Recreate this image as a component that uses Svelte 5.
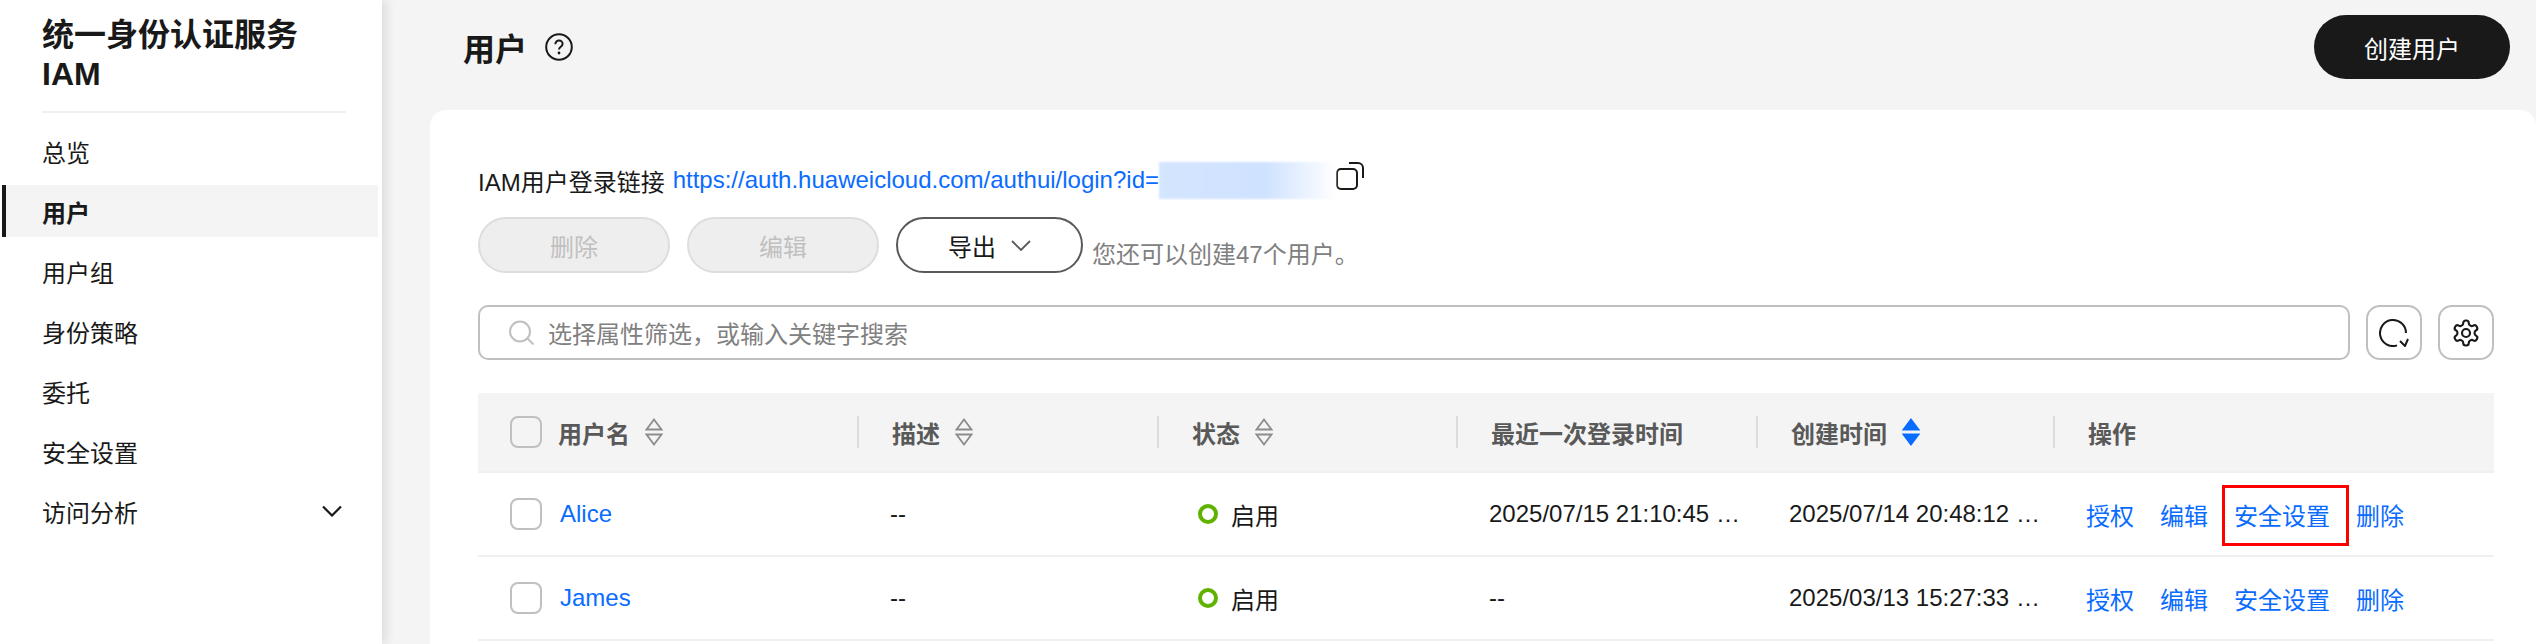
<script>
	// Sidebar entries
	const navItems = ["总览", "用户", "用户组", "身份策略", "委托", "安全设置", "访问分析"];

	// Table columns
	const columns = [
		{ name: "用户名", sort: "none" },
		{ name: "描述", sort: "none" },
		{ name: "状态", sort: "none" },
		{ name: "最近一次登录时间" },
		{ name: "创建时间", sort: "down" },
		{ name: "操作" },
	];

	const users = [
		{ name: "Alice", desc: "--", status: "启用", login: "2025/07/15 21:10:45 GMT+08:00", created: "2025/07/14 20:48:12 GMT+08:00", marked: true },
		{ name: "James", desc: "--", status: "启用", login: "--", created: "2025/03/13 15:27:33 GMT+08:00", marked: false },
	];
</script>

<div class="page">
	<aside class="sidebar">
		<h2 class="service">统一身份认证服务<br />IAM</h2>
		<div class="rule"></div>
		<nav>
			{#each navItems as item}
				<div class="nav-item" class:active={item === "用户"}>
					<span>{item}</span>
					{#if item === "访问分析"}
						<svg class="nav-chevron" width="20" height="12" viewBox="0 0 20 12" fill="none">
							<path d="M1 1.5l9 9 9-9" stroke="#191919" stroke-width="2.2" />
						</svg>
					{/if}
				</div>
			{/each}
		</nav>
	</aside>

	<main>
		<header>
			<h1>用户</h1>
			<svg class="help" width="28" height="28" viewBox="0 0 28 28" fill="none">
				<circle cx="14" cy="14" r="12.8" stroke="#191919" stroke-width="2" />
				<path d="M10.4 11.2c0-2.2 1.6-3.6 3.6-3.6s3.6 1.4 3.6 3.3c0 2.8-3.6 2.9-3.6 5.6" stroke="#191919" stroke-width="2" />
				<circle cx="14" cy="20" r="1.4" fill="#191919" />
			</svg>
			<button class="create">创建用户</button>
		</header>

		<section class="card">
			<div class="login-link">
				<span>IAM用户登录链接</span>
				<span class="link">https://auth.huaweicloud.com/authui/login?id=</span>
				<span class="blur"></span>
				<svg class="copy" width="28" height="28" viewBox="0 0 28 28" fill="none">
					<rect x="1" y="7" width="20" height="20" rx="4" stroke="#191919" stroke-width="2" />
					<path d="M13 1h9a5 5 0 0 1 5 5v10" stroke="#191919" stroke-width="2" />
				</svg>
			</div>

			<div class="actions">
				<button class="pill" disabled>删除</button>
				<button class="pill" disabled>编辑</button>
				<button class="pill export">
					导出
					<svg width="20" height="11" viewBox="0 0 20 11" fill="none">
						<path d="M1 1l9 9 9-9" stroke="#595959" stroke-width="1.8" />
					</svg>
				</button>
				<span class="quota">您还可以创建47个用户。</span>
			</div>

			<div class="filter">
				<div class="search">
					<svg width="27" height="26" viewBox="0 0 27 26" fill="none">
						<circle cx="12" cy="11.5" r="10" stroke="#c0c0c0" stroke-width="2" />
						<path d="M19.5 18.5l6 6" stroke="#c0c0c0" stroke-width="2" />
					</svg>
					<span>选择属性筛选，或输入关键字搜索</span>
				</div>
				<button class="icon-btn" aria-label="刷新">
					<svg width="30" height="28" viewBox="0 0 30 28" fill="none">
						<path d="M27 14a13 13 0 1 0-9 12.4" stroke="#191919" stroke-width="2" />
						<path d="M21 22l5 5 3-7" stroke="#191919" stroke-width="2" />
					</svg>
				</button>
				<button class="icon-btn" aria-label="设置">
					<svg width="30" height="30" viewBox="0 0 24 24" fill="none" stroke="#191919" stroke-width="1.7">
						<path d="M12.22 2h-.44a2 2 0 0 0-2 2v.18a2 2 0 0 1-1 1.73l-.43.25a2 2 0 0 1-2 0l-.15-.08a2 2 0 0 0-2.73.73l-.22.38a2 2 0 0 0 .73 2.73l.15.1a2 2 0 0 1 1 1.72v.51a2 2 0 0 1-1 1.74l-.15.09a2 2 0 0 0-.73 2.73l.22.38a2 2 0 0 0 2.73.73l.15-.08a2 2 0 0 1 2 0l.43.25a2 2 0 0 1 1 1.73V20a2 2 0 0 0 2 2h.44a2 2 0 0 0 2-2v-.18a2 2 0 0 1 1-1.73l.43-.25a2 2 0 0 1 2 0l.15.08a2 2 0 0 0 2.73-.73l.22-.39a2 2 0 0 0-.73-2.73l-.15-.08a2 2 0 0 1-1-1.74v-.5a2 2 0 0 1 1-1.74l.15-.09a2 2 0 0 0 .73-2.73l-.22-.38a2 2 0 0 0-2.73-.73l-.15.08a2 2 0 0 1-2 0l-.43-.25a2 2 0 0 1-1-1.73V4a2 2 0 0 0-2-2z" />
						<circle cx="12" cy="12" r="3.2" />
					</svg>
				</button>
			</div>

			<div class="table">
				<div class="row head">
					{#each columns as col, i}
						<div class="cell">
							{#if i === 0}<span class="check"></span>{/if}
							<span class="th">{col.name}</span>
							{#if col.sort}
								<svg class="sort" width="18" height="28" viewBox="0 0 18 28" fill="none">
									<path d="M9 1.5l7.5 10h-15z" stroke={col.sort === "down" ? "#0a6cff" : "#8c8c8c"} fill={col.sort === "down" ? "#0a6cff" : "none"} stroke-width="1.8" />
									<path d="M9 26.5l7.5-10h-15z" stroke={col.sort === "down" ? "#0a6cff" : "#8c8c8c"} fill={col.sort === "down" ? "#0a6cff" : "none"} stroke-width="1.8" />
								</svg>
							{/if}
						</div>
					{/each}
				</div>

				{#each users as user}
					<div class="row">
						<div class="cell">
							<span class="check"></span>
							<span class="link user">{user.name}</span>
						</div>
						<div class="cell">{user.desc}</div>
						<div class="cell status">
							<span class="dot"></span>
							{user.status}
						</div>
						<div class="cell"><span class="clip">{user.login}</span></div>
						<div class="cell"><span class="clip">{user.created}</span></div>
						<div class="cell ops">
							<span class="link">授权</span>
							<span class="link">编辑</span>
							<span class="link safe">
								安全设置
								{#if user.marked}<span class="mark"></span>{/if}
							</span>
							<span class="link">删除</span>
						</div>
					</div>
				{/each}
			</div>
		</section>
	</main>
</div>

<style>
	:global(body) {
		margin: 0;
		overflow: hidden;
	}

	* {
		box-sizing: border-box;
	}

	.page {
		display: flex;
		height: 644px;
		overflow: hidden;
		background: #f4f4f4;
		color: #191919;
		font-family: "Liberation Sans", "Noto Sans CJK SC", sans-serif;
		font-size: 24px;
	}

	.sidebar {
		flex: 0 0 382px;
		background: #fff;
		box-shadow: 4px 0 10px rgba(0, 0, 0, 0.1);
		z-index: 1;
	}

	.service {
		margin: 0;
		padding: 16px 0 0 42px;
		font-size: 32px;
		line-height: 39px;
		font-weight: 700;
	}

	.rule {
		height: 2px;
		width: 304px;
		margin: 17px 0 0 42px;
		background: #f0f0f0;
	}

	nav {
		margin-top: 12px;
	}

	.nav-item {
		display: flex;
		align-items: center;
		justify-content: space-between;
		height: 52px;
		margin: 0 4px 8px 2px;
		padding: 0 36px 0 40px;
	}

	.nav-item.active {
		background: #f4f4f4;
		border-left: 4px solid #191919;
		padding-left: 36px;
		font-weight: 700;
	}

	main {
		flex: 1;
		min-width: 0;
	}

	header {
		display: flex;
		align-items: center;
		height: 110px;
		padding: 0 26px 16px 81px;
	}

	h1 {
		margin: 0 18px 0 0;
		font-size: 32px;
		font-weight: 700;
	}

	.create {
		margin-left: auto;
		width: 196px;
		height: 64px;
		border: none;
		border-radius: 32px;
		background: #191919;
		color: #fff;
		font: inherit;
	}

	.card {
		margin-left: 48px;
		padding: 51px 42px 0 48px;
		height: 534px;
		background: #fff;
		border-radius: 16px 16px 0 0;
	}

	.login-link {
		display: flex;
		align-items: center;
		height: 38px;
		gap: 8px;
	}

	.link {
		color: #0a6cff;
	}

	.blur {
		width: 177px;
		height: 37px;
		margin-left: -8px;
		background: linear-gradient(90deg, #d4e5ff, #cfe2ff 60%, #fff);
		filter: blur(1px);
	}

	.copy {
		margin: -8px 0 0 -8px;
	}

	.actions {
		display: flex;
		align-items: center;
		margin-top: 18px;
	}

	.pill {
		width: 192px;
		height: 56px;
		margin-right: 17px;
		border: 2px solid #ddd;
		border-radius: 28px;
		background: #eee;
		color: #c0c0c0;
		font: inherit;
	}

	.export {
		display: flex;
		align-items: center;
		justify-content: center;
		gap: 15px;
		width: 187px;
		margin-right: 9px;
		border-color: #595959;
		background: #fff;
		color: #191919;
	}

	.quota {
		margin-top: 14px;
		color: #808080;
	}

	.filter {
		display: flex;
		gap: 16px;
		margin-top: 32px;
	}

	.search {
		display: flex;
		align-items: center;
		gap: 13px;
		flex: 1;
		height: 55px;
		padding-left: 28px;
		border: 2px solid #c0c0c0;
		border-radius: 10px;
		color: #808080;
	}

	.icon-btn {
		display: flex;
		align-items: center;
		justify-content: center;
		width: 56px;
		height: 55px;
		padding: 0;
		border: 2px solid #c0c0c0;
		border-radius: 14px;
		background: #fff;
	}

	.table {
		margin-top: 33px;
	}

	.row {
		display: grid;
		grid-template-columns: 379px 300px 299px 300px 297px 441px;
		align-items: center;
		height: 84px;
		border-bottom: 2px solid #f0f0f0;
	}

	.row.head {
		height: 80px;
		background: #f4f4f4;
	}

	.cell {
		display: flex;
		align-items: center;
		min-width: 0;
		height: 32px;
		padding-left: 33px;
	}

	.cell:first-child {
		padding-left: 32px;
	}

	.head .cell:not(:first-child) {
		border-left: 2px solid #ddd;
	}

	.th {
		font-weight: 700;
		color: #595959;
	}

	.check {
		flex: none;
		width: 32px;
		height: 32px;
		margin-right: 16px;
		border: 2px solid #c0c0c0;
		border-radius: 8px;
		background: #fff;
	}

	.head .check {
		background: #f4f4f4;
	}

	.sort {
		margin-left: 15px;
	}

	.user {
		margin-left: 2px;
	}

	.status .dot {
		width: 20px;
		height: 20px;
		margin: 0 13px 0 8px;
		border: 4px solid #5fb300;
		border-radius: 50%;
	}

	.clip {
		display: block;
		width: 252px;
		overflow: hidden;
		white-space: nowrap;
		text-overflow: ellipsis;
	}

	.ops {
		gap: 26px;
	}

	.safe {
		position: relative;
	}

	.mark {
		position: absolute;
		left: -12px;
		top: -12px;
		width: 127px;
		height: 61px;
		border: 3px solid #f00;
	}
</style>
